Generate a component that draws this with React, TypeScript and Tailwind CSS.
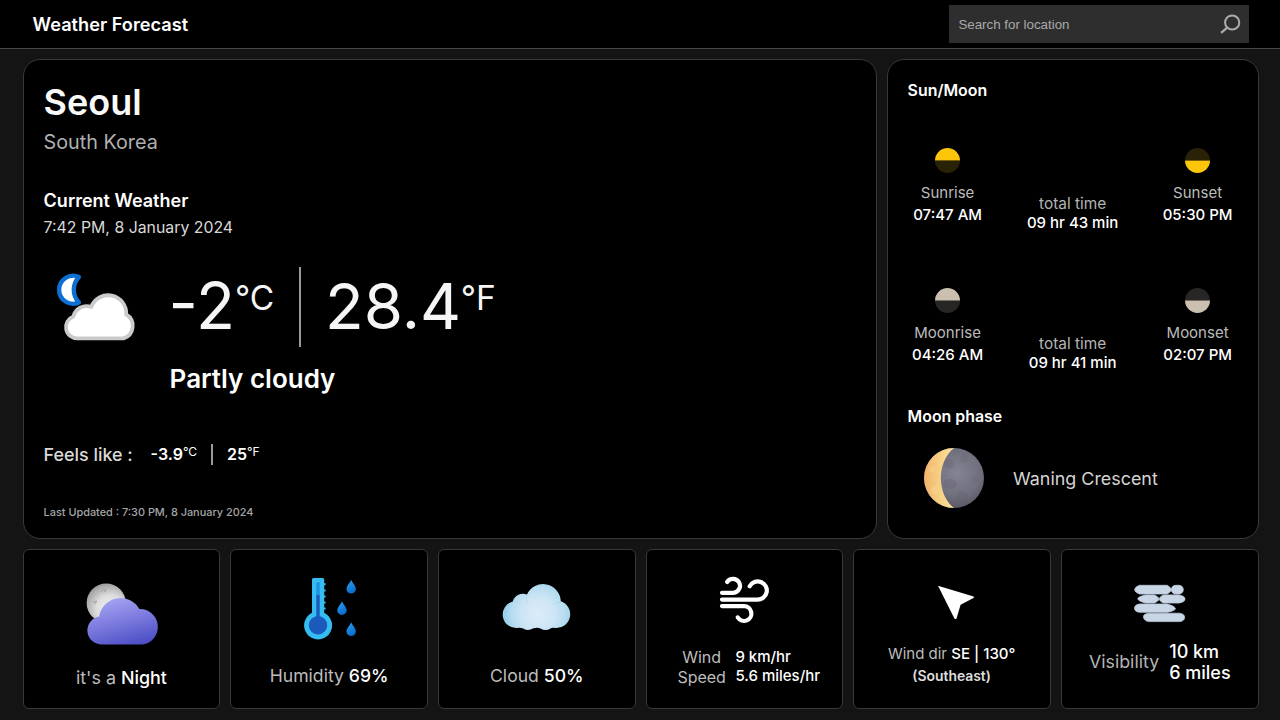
import type { ReactNode } from "react";

function WeatherIcon() {
  return (
    <svg className="h-20 w-[100px]" viewBox="43.4 267 100 80">
      <path d="M78.3 277A14 14 0 1 0 78.3 302.5A18.5 18.5 0 0 1 78.3 277Z" fill="#fff" stroke="#0b6fd3" strokeWidth="4.4" strokeLinejoin="round" />
      <path d="M77.3 338.4A11.3 11.3 0 0 1 72.8 316.5A13.5 13.5 0 0 1 90.6 307A18.1 18.1 0 0 1 125.6 314.5A13.2 13.2 0 0 1 123 338.4Z" fill="#fff" stroke="#cbcbcb" strokeWidth="3.8" strokeLinejoin="round" />
    </svg>
  );
}

function HalfDisc({ top, bottom, line }: { top: string; bottom: string; line: string }) {
  return (
    <svg className="mx-auto block size-[25px]" viewBox="0 0 25 25">
      <path d="M0 12.5A12.5 12.5 0 0 1 25 12.5Z" fill={top} />
      <path d="M0 12.5A12.5 12.5 0 0 0 25 12.5Z" fill={bottom} />
      <path d="M0 12.5H25" stroke={line} strokeWidth="1" />
    </svg>
  );
}

function MoonPhaseIcon() {
  return (
    <svg className="size-[60px]" viewBox="0 0 60 60">
      <defs>
        <radialGradient id="phaseDark" cx="0.55" cy="0.42" r="0.6">
          <stop offset="0" stopColor="#858492" />
          <stop offset="0.65" stopColor="#706f7d" />
          <stop offset="1" stopColor="#575562" />
        </radialGradient>
        <linearGradient id="phaseLit" x1="0" x2="1">
          <stop offset="0" stopColor="#f2b26c" />
          <stop offset="0.5" stopColor="#f6cf83" />
          <stop offset="1" stopColor="#ffe49b" />
        </linearGradient>
      </defs>
      <circle cx="30" cy="30" r="30" fill="url(#phaseDark)" />
      <circle cx="25" cy="16" r="5" fill="#676574" opacity="0.35" />
      <ellipse cx="26" cy="36" rx="7" ry="5" fill="#676574" opacity="0.35" />
      <circle cx="40" cy="11" r="4" fill="#686675" opacity="0.25" />
      <circle cx="38" cy="49" r="6" fill="#62606e" opacity="0.3" />
      <circle cx="51" cy="31" r="4" fill="#686675" opacity="0.25" />
      <path d="M30 0A30 30 0 0 0 30 60C12.5 46 12.5 14 30 0Z" fill="url(#phaseLit)" />
      <circle cx="8" cy="21" r="3" fill="#fadc94" opacity="0.35" />
      <circle cx="11" cy="42" r="4" fill="#fadc94" opacity="0.35" />
    </svg>
  );
}

function NightIcon() {
  return (
    <svg className="h-[70px] w-20" viewBox="81.2 577 80 70">
      <defs>
        <radialGradient id="nightMoon" cx="0.6" cy="0.65" r="0.7">
          <stop offset="0" stopColor="#f2f2f2" />
          <stop offset="0.5" stopColor="#dedede" />
          <stop offset="1" stopColor="#979797" />
        </radialGradient>
        <linearGradient id="nightCloud" x1="0.3" y1="0" x2="0.7" y2="1">
          <stop offset="0" stopColor="#a6a4f2" />
          <stop offset="0.5" stopColor="#7b7ade" />
          <stop offset="1" stopColor="#4d4fc4" />
        </linearGradient>
      </defs>
      <circle cx="106.4" cy="603" r="19.6" fill="url(#nightMoon)" />
      <path d="M101 592Q103 588 107 590M104 592L106 591M93 602L97 601L95 604" fill="none" stroke="#a3a3a3" strokeWidth="1" />
      <path d="M101.3 644.5A14.05 14.05 0 0 1 99.3 616.6A21.6 21.6 0 0 1 139.5 609.1A17.8 17.8 0 0 1 142.8 644.5Z" fill="url(#nightCloud)" />
    </svg>
  );
}

function HumidityIcon() {
  const drops = [[351.2, 579.8], [342, 601.2], [351.2, 622.3]];
  return (
    <svg className="h-[70px] w-[60px]" viewBox="299 573 60 70">
      <defs>
        <linearGradient id="drop" x1="0" y1="0" x2="0.5" y2="1">
          <stop offset="0" stopColor="#30a3f0" />
          <stop offset="1" stopColor="#096dce" />
        </linearGradient>
      </defs>
      <path d="M312 579.5Q312 578 313.5 578H322.7Q324.2 578 324.2 579.5V612.8A14 14 0 1 1 312 612.8Z" fill="#35bdf1" />
      <path d="M324 584.3H325.6M324 590.4H325.6M324 596.4H325.6M324 602.5H325.6M324 608.5H325.6" stroke="#35bdf1" strokeWidth="2" />
      <path d="M316.3 595V583.5Q316.3 582 318 582T319.7 583.5V595Z" fill="#1c93dc" />
      <path d="M316.3 595H319.7V620H316.3Z" fill="#1b59ba" />
      <circle cx="318" cy="625.3" r="9.2" fill="#1b59ba" />
      {drops.map(([x, y]) => (
        <path key={y} transform={`translate(${x} ${y})`} d="M0 0C.8 2.5 4.7 6 4.7 9.3A4.7 4.4 0 0 1-4.7 9.3C-4.7 6-.8 2.5 0 0Z" fill="url(#drop)" />
      ))}
    </svg>
  );
}

function CloudIcon() {
  return (
    <svg className="h-[60px] w-[70px]" viewBox="501.5 578 70 60">
      <defs>
        <radialGradient id="cloud" gradientUnits="userSpaceOnUse" cx="538" cy="614" r="34">
          <stop offset="0" stopColor="#dcebf9" />
          <stop offset="0.5" stopColor="#cde5f5" />
          <stop offset="0.8" stopColor="#b5dcf0" />
          <stop offset="1" stopColor="#98cfea" />
        </radialGradient>
      </defs>
      <path d="M517 628A13.5 13.5 0 0 1 512.3 601.5A10.5 10.5 0 0 1 526.5 594.5A17.7 17.7 0 0 1 560.3 601.3A13.7 13.7 0 0 1 555.5 628Q551 627.5 550 628.5Q545 631.5 540 628.5Q537 627.2 533 628.3Q527 631.5 522 628.3Q520 627.6 517 628Z" fill="url(#cloud)" />
      <path d="M513 602Q517 601 520 604M526.5 595Q525 599 527 603M560 602Q555 602 552 605" fill="none" stroke="#a9d6ec" strokeWidth="1" opacity="0.6" />
    </svg>
  );
}

function WindIcon() {
  return (
    <svg className="h-[50px] w-[54px]" viewBox="717.3 575 54 50" fill="none" stroke="#fff" strokeWidth="4.2" strokeLinecap="round" strokeLinejoin="round">
      <path d="M722.3 592.8H733.7A7 7 0 1 0 727.4 582" />
      <path d="M722.3 599.6H757.6A9.1 9.1 0 1 0 750 586.2" />
      <path d="M722.3 606.1H744A7.4 7.4 0 1 1 738 617.4" />
    </svg>
  );
}

function DirectionIcon() {
  return (
    <svg className="h-[50px] w-[50px]" viewBox="931.2 577 50 50">
      <path d="M938.2 585.8L973.8 596.6Q974.6 597.2 973.7 597.9L960.8 604.8L956.8 618.2Q956 619.8 954.6 618.6Z" fill="#fff" />
    </svg>
  );
}

function MistIcon() {
  return (
    <svg className="h-[50px] w-[60px]" viewBox="1129.7 578 60 50" fill="#c8d6e6" stroke="#b9c8da" strokeWidth="0.8">
      <path d="M1139 585.3H1167Q1171 588 1171 589.7T1167 594H1139Q1134.3 592 1134.3 589.7T1139 585.3Z" />
      <rect x="1171" y="585.3" width="12" height="8.7" rx="4.3" />
      <path d="M1145 594.9H1154Q1158.6 597 1158.6 599T1154 603H1145Q1138 601 1137.5 599T1145 594.9Z" />
      <path d="M1163 594.9H1179Q1184.8 596 1184.8 599T1179 603H1163Q1159 601 1159 599T1163 594.9Z" />
      <path d="M1139 604H1167Q1174 606 1175 608.2T1167 612.3H1139Q1134.2 611.5 1134.2 608.2T1139 604Z" />
      <path d="M1149 613.2H1179Q1184.3 613.8 1184.3 617.4T1179 621.6H1149Q1144 621 1143.2 617.4T1149 613.2Z" />
    </svg>
  );
}

function RiseSet({ icon, label, time }: { icon: ReactNode; label: string; time: string }) {
  return (
    <div className="w-20 text-center text-[15px] whitespace-nowrap">
      {icon}
      <p className="mt-[9px] leading-[22px] text-[#bcbcbc]">{label}</p>
      <p className="leading-[22px] font-medium text-white">{time}</p>
    </div>
  );
}

function SunMoonRow({ left, right, total }: { left: ReactNode; right: ReactNode; total: string }) {
  return (
    <div className="flex h-[78px] w-[330px] justify-between">
      {left}
      <div className="pt-[46px] text-center text-[15px] leading-[19px]">
        <p className="text-[15.4px] text-[#b4b4b4]">total time</p>
        <p className="font-medium text-white">{total}</p>
      </div>
      {right}
    </div>
  );
}

function Tile({ children, className }: { children: ReactNode; className: string }) {
  return (
    <section className={`flex h-40 min-w-0 flex-1 flex-col items-center rounded-md border border-[#393939] bg-black whitespace-nowrap ${className}`}>
      {children}
    </section>
  );
}

export default function App() {
  const sun = "#fdc60b";
  const sunDim = "#2a2207";
  const moon = "#cbbfb0";
  const moonDim = "#282625";
  return (
    <div className="h-[720px] w-[1280px] overflow-hidden bg-[#141414] font-['Inter',sans-serif] text-white">
      <header className="flex h-[49px] items-center justify-between border-b border-[#474747] bg-black pr-[31px] pl-[32.6px]">
        <h1 className="text-[18.2px] leading-6 font-semibold">Weather Forecast</h1>
        <label className="flex h-[38px] w-[300px] items-center justify-between bg-[#2e2e2e] pr-[7px] pl-[9.4px]">
          <input
            className="w-48 bg-transparent pt-0.5 font-['Liberation_Sans',sans-serif] text-[13.333px] text-white outline-none placeholder:text-[#a9a9a9] placeholder:opacity-100"
            placeholder="Search for location"
          />
          <svg className="size-6" viewBox="0 0 24 24" fill="none" stroke="#ababab" strokeWidth="2">
            <circle cx="14.2" cy="10.5" r="7.1" />
            <path d="M9.2 15.6L3.1 20.9" strokeWidth="2.3" />
          </svg>
        </label>
      </header>

      <main className="flex flex-col gap-2.5 pt-2.5 pr-[21.4px] pl-[22.6px]">
        <div className="flex gap-2.5">
          <section className="h-[480px] w-[854px] rounded-[17px] border border-[#393939] bg-black pt-5 pl-5">
            <h2 className="text-4xl leading-[44px] font-semibold text-[#fafafa]">Seoul</h2>
            <p className="mt-1 text-[19.75px] leading-7 text-[#b0b0b0]">South Korea</p>
            <h3 className="mt-8 text-lg leading-[25px] font-semibold">Current Weather</h3>
            <p className="mt-1 text-[15.85px] leading-[21px] text-[#d8d8d8]">7:42 PM, 8 January 2024</p>

            <div className="mt-[29px] flex h-20 text-[#f5f5f5]">
              <WeatherIcon />
              <div className="ml-[25px] flex w-[130px]">
                <span className="w-[66.4px] text-[64px] leading-[78px]">-2</span>
                <span className="text-[33.5px] leading-[62px]">°C</span>
              </div>
              <div className="h-20 w-0.5 bg-[#999]" />
              <div className="ml-[24.5px] flex">
                <span className="w-[135.7px] text-[63.5px] leading-[78px]">28.4</span>
                <span className="text-[33.5px] leading-[62px]">°F</span>
              </div>
            </div>
            <p className="mt-4 pl-[126px] text-[26px] leading-8 font-semibold">Partly cloudy</p>

            <div className="mt-[49px] flex h-[21px] text-base leading-[21px]">
              <span className="w-[107px] text-[17.9px] leading-[21px] font-medium text-[#dadada]">Feels like :</span>
              <span className="flex w-[60.4px] font-semibold">
                -3.9<span className="text-xs leading-4 font-normal">°C</span>
              </span>
              <span className="mr-3.5 h-[21px] w-0.5 bg-[#999]" />
              <span className="flex font-semibold">
                25<span className="text-xs leading-4 font-normal">°F</span>
              </span>
            </div>
            <p className="mt-[39px] text-[10.9px] leading-4 font-medium text-[#a6a6a6]">Last Updated : 7:30 PM, 8 January 2024</p>
          </section>

          <section className="h-[480px] w-[372px] rounded-[17px] border border-[#393939] bg-black pt-5 pl-5">
            <h3 className="text-[15.9px] leading-[21px] font-semibold">Sun/Moon</h3>
            <div className="mt-[47px] flex flex-col gap-[62px]">
              <SunMoonRow
                left={<RiseSet icon={<HalfDisc top={sun} bottom={sunDim} line="#7a6009" />} label="Sunrise" time="07:47 AM" />}
                right={<RiseSet icon={<HalfDisc top={sunDim} bottom={sun} line="#7a6009" />} label="Sunset" time="05:30 PM" />}
                total="09 hr 43 min"
              />
              <SunMoonRow
                left={<RiseSet icon={<HalfDisc top={moon} bottom={moonDim} line="#736c64" />} label="Moonrise" time="04:26 AM" />}
                right={<RiseSet icon={<HalfDisc top={moonDim} bottom={moon} line="#736c64" />} label="Moonset" time="02:07 PM" />}
                total="09 hr 41 min"
              />
            </div>
            <h3 className="mt-10 text-[15.9px] leading-[21px] font-semibold">Moon phase</h3>
            <div className="mt-[21px] flex items-center gap-[29.5px] pl-4">
              <MoonPhaseIcon />
              <p className="pt-0.5 text-[17.9px] leading-6 text-[#d4d4d4]">Waning Crescent</p>
            </div>
          </section>
        </div>

        <div className="flex gap-2.5">
          <Tile className="pt-[27px] text-[17.9px]">
            <NightIcon />
            <p className="mt-[18px] leading-[25px] text-[#bcbcbc]">it's a <span className="font-medium text-white">Night</span></p>
          </Tile>
          <Tile className="pt-[23px] text-[17.6px]">
            <HumidityIcon />
            <p className="mt-5 leading-[25px] text-[#bcbcbc]">Humidity <span className="font-medium text-white">69%</span></p>
          </Tile>
          <Tile className="pt-7 text-[17.6px]">
            <CloudIcon />
            <p className="mt-[25px] leading-[25px] text-[#bcbcbc]">Cloud <span className="font-medium text-white">50%</span></p>
          </Tile>
          <Tile className="pt-[25px]">
            <WindIcon />
            <div className="mt-[22px] ml-[8.5px] flex gap-[9.5px] text-[15px] leading-[19px] font-medium">
              <p className="text-center text-base leading-5 font-normal text-[#bcbcbc]">Wind<br />Speed</p>
              <p>9 km/hr<br />5.6 miles/hr</p>
            </div>
          </Tile>
          <Tile className="pt-[27px]">
            <div className="pl-2"><DirectionIcon /></div>
            <p className="mt-4 pr-px text-[15px] leading-[22px] text-[#bcbcbc]">Wind dir <span className="font-medium text-white">SE | 130°</span></p>
            <p className="pr-px text-[13.9px] leading-[22px] font-semibold text-[#dedede]">(Southeast)</p>
          </Tile>
          <Tile className="pt-7">
            <MistIcon />
            <div className="mt-[13px] flex items-center gap-2.5 text-lg leading-[21px] font-medium">
              <p className="pb-0.5 text-[17.8px] font-normal text-[#b4b4b4]">Visibility</p>
              <p>10 km<br />6 miles</p>
            </div>
          </Tile>
        </div>
      </main>
    </div>
  );
}
